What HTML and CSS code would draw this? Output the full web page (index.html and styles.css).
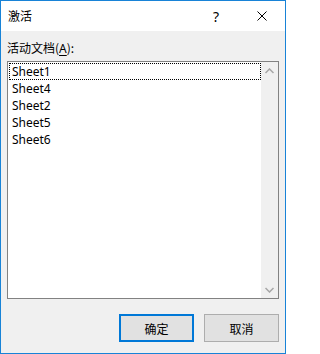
FILE: index.html
```html
<!DOCTYPE html>
<html>
<head>
<meta charset="utf-8">
<link rel="stylesheet" href="styles.css">
</head>
<body>
<div class="window">
  <div class="titlebar">
    <span class="title">激活</span>
    <div class="caption-buttons">
      <span class="cap help">?</span>
      <span class="cap close"><svg width="10" height="10" viewBox="0 0 10 10"><path d="M0.5 0.5L9.5 9.5M9.5 0.5L0.5 9.5" stroke="#000" stroke-width="1" fill="none"/></svg></span>
    </div>
  </div>
  <div class="content">
    <div class="label">活动文档(<u>A</u>):</div>
    <div class="listbox">
      <ul class="items">
        <li class="item focused">Sheet1</li>
        <li class="item">Sheet4</li>
        <li class="item">Sheet2</li>
        <li class="item">Sheet5</li>
        <li class="item">Sheet6</li>
      </ul>
      <div class="scrollbar">
        <span class="arrow"><svg width="9" height="6" viewBox="0 0 9 6"><path d="M0.5 5L4.5 1L8.5 5" stroke="#a6a6a6" stroke-width="1.5" fill="none"/></svg></span>
        <span class="arrow"><svg width="9" height="6" viewBox="0 0 9 6"><path d="M0.5 1L4.5 5L8.5 1" stroke="#a6a6a6" stroke-width="1.5" fill="none"/></svg></span>
      </div>
    </div>
    <div class="buttons">
      <button class="btn default">确定</button>
      <button class="btn">取消</button>
    </div>
  </div>
</div>
</body>
</html>
```
FILE: styles.css
```css
html, body {
  margin: 0;
  padding: 0;
  background: #ffffff;
}
body {
  font-family: "Noto Sans", "Noto Sans CJK SC", sans-serif;
  font-size: 12px;
  color: #000;
}
.window {
  width: 286px;
  height: 354px;
  box-sizing: border-box;
  border: 1px solid #1883d7;
  display: flex;
  flex-direction: column;
  background: #f0f0f0;
}
.titlebar {
  height: 30px;
  background: #ffffff;
  display: flex;
  align-items: center;
  justify-content: space-between;
  padding-left: 7px;
}
.title {
  font-family: "Noto Sans CJK SC", sans-serif;
  font-size: 12px;
  line-height: 30px;
}
.caption-buttons {
  display: flex;
  height: 30px;
}
.cap {
  width: 46px;
  height: 30px;
  display: flex;
  align-items: center;
  justify-content: center;
}
.help {
  font-family: "Noto Sans", sans-serif;
  font-size: 14px;
}
.content {
  flex: 1;
  display: flex;
  flex-direction: column;
  padding: 9px 6px 11px 6px;
}
.label {
  font-family: "Noto Sans CJK SC", sans-serif;
  line-height: 16px;
  height: 16px;
  margin-bottom: 5px;
}
.label u {
  font-family: "Noto Sans", sans-serif;
  text-underline-offset: 2px;
}
.listbox {
  height: 238px;
  box-sizing: border-box;
  border: 1px solid #828282;
  background: #ffffff;
  display: flex;
}
.items {
  flex: 1;
  list-style: none;
  margin: 0;
  padding: 1px 0 0 1px;
}
.item {
  height: 17px;
  box-sizing: border-box;
  border: 1px solid transparent;
  padding-left: 2px;
  line-height: 15px;
}
.item.focused {
  border: 1px dotted #000;
}
.scrollbar {
  width: 17px;
  background: #f0f0f0;
  display: flex;
  flex-direction: column;
  justify-content: space-between;
}
.arrow {
  height: 17px;
  display: flex;
  align-items: center;
  justify-content: center;
}
.buttons {
  margin-top: 15px;
  display: flex;
  justify-content: flex-end;
  gap: 10px;
}
.btn {
  width: 75px;
  height: 28px;
  box-sizing: border-box;
  margin: 0;
  padding: 0;
  border: 1px solid #adadad;
  background: #e1e1e1;
  font-family: "Noto Sans CJK SC", sans-serif;
  font-size: 12px;
  color: #000;
}
.btn.default {
  border: 2px solid #0078d7;
}
```
